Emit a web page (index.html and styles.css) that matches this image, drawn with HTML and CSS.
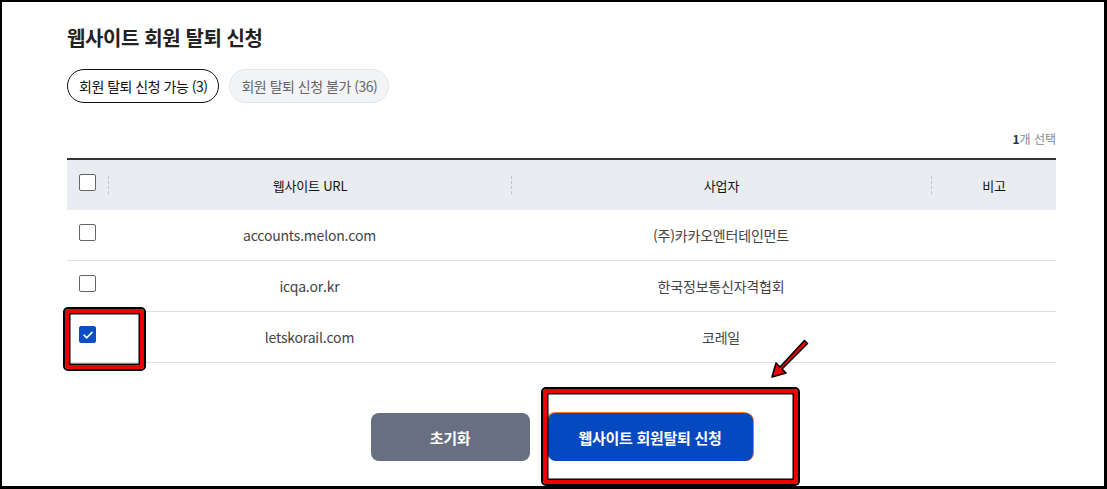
FILE: index.html
```html
<!DOCTYPE html>
<html lang="ko">
<head>
<meta charset="utf-8">
<link rel="stylesheet" href="styles.css">
</head>
<body>
<div class="frame">
  <div class="content">
    <h1 class="title">웹사이트 회원 탈퇴 신청</h1>
    <div class="tabs">
      <span class="tab active">회원 탈퇴 신청 가능 (3)</span>
      <span class="tab">회원 탈퇴 신청 불가 (36)</span>
    </div>
    <div class="count"><b>1</b>개 선택</div>
    <div class="table">
      <div class="row head">
        <div class="cell chk"><span class="box"></span></div>
        <div class="cell sep">웹사이트 URL</div>
        <div class="cell sep">사업자</div>
        <div class="cell sep">비고</div>
      </div>
      <div class="row">
        <div class="cell chk"><span class="box"></span></div>
        <div class="cell">accounts.melon.com</div>
        <div class="cell">(주)카카오엔터테인먼트</div>
        <div class="cell"></div>
      </div>
      <div class="row">
        <div class="cell chk"><span class="box"></span></div>
        <div class="cell">icqa.or.kr</div>
        <div class="cell">한국정보통신자격협회</div>
        <div class="cell"></div>
      </div>
      <div class="row">
        <div class="cell chk"><span class="box checked"><svg width="12" height="10" viewBox="0 0 12 10"><path d="M2 5.2 L4.8 7.8 L10 2.4" fill="none" stroke="#fff" stroke-width="1.6" stroke-linecap="round" stroke-linejoin="round"/></svg></span></div>
        <div class="cell">letskorail.com</div>
        <div class="cell">코레일</div>
        <div class="cell"></div>
      </div>
    </div>
    <div class="actions">
      <button class="btn reset">초기화</button>
      <button class="btn submit">웹사이트 회원탈퇴 신청</button>
    </div>
  </div>
  <div class="mark mark-chk"></div>
  <div class="mark mark-btn"></div>
  <svg class="arrow" width="50" height="50" viewBox="0 0 50 50">
    <path d="M40.5 6.5 L43.5 9.5 L18 35 L22 39 L8 43 L12 29 L16 33 L40.5 6.5 Z" fill="#ee0000" stroke="#000" stroke-width="1.6" stroke-linejoin="round"/>
  </svg>
</div>
</body>
</html>
```

FILE: styles.css
```css
* { box-sizing: border-box; }
html, body { margin: 0; padding: 0; background: #fff; }
body {
  font-family: "Noto Sans CJK KR", "Noto Sans", sans-serif;
  color: #222;
}
.frame {
  position: relative;
  width: 1107px;
  height: 489px;
  border-style: solid;
  border-color: #000;
  border-width: 2px 3px 3px 2px;
  overflow: hidden;
}
.content {
  padding: 21px 0 0 65px;
  width: 1054px;
}
.title {
  margin: 0;
  font-size: 20px;
  line-height: 30px;
  font-weight: 700;
  color: #222;
  letter-spacing: -0.4px;
}
.tabs {
  display: flex;
  gap: 10px;
  margin-top: 16px;
}
.tab {
  height: 34px;
  padding: 0 11px;
  border: 1px solid #e2e4e8;
  border-radius: 17px;
  background: #f3f4f6;
  color: #666;
  font-size: 14px;
  display: flex;
  align-items: center;
  letter-spacing: -0.5px;
}
.tab.active {
  border-color: #111;
  background: #fff;
  color: #111;
}
.count {
  margin-top: 27px;
  text-align: right;
  font-size: 12px;
  line-height: 18px;
  color: #888;
}
.count b { color: #333; font-weight: 700; }
.table {
  margin-top: 10px;
  border-top: 2px solid #333;
}
.row {
  display: grid;
  grid-template-columns: 41px 403px 420px 125px;
  height: 51px;
  border-bottom: 1px solid #dedede;
  align-items: center;
}
.row.head {
  background: #e9edf1;
  height: 50px;
  border-bottom: none;
}
.cell {
  height: 100%;
  display: flex;
  align-items: center;
  justify-content: center;
  font-size: 14px;
  color: #444;
  letter-spacing: -0.2px;
}
.head .cell { font-size: 13px; color: #111; }
.head .cell.sep { border-left: 1px dashed #b9c5d2; height: 18px; }
.cell.chk {
  justify-content: flex-start;
  align-items: flex-start;
  padding: 14px 0 0 12px;
}
.head .cell.chk { padding-top: 14px; }
.box {
  width: 17px;
  height: 17px;
  border: 1.5px solid #666;
  border-radius: 2px;
  background: #fff;
  display: flex;
  align-items: center;
  justify-content: center;
}
.box.checked {
  background: #0a4fc4;
  border-color: #0a4fc4;
}
.actions {
  display: flex;
  justify-content: center;
  gap: 18px;
  margin-top: 50px;
}
.btn {
  height: 48px;
  border: none;
  border-radius: 8px;
  color: #fff;
  font-family: inherit;
  font-size: 15px;
  font-weight: 700;
  letter-spacing: -0.3px;
}
.btn.reset { width: 159px; background: #676f80; }
.btn.submit {
  width: 205px;
  background: #0449c0;
  box-shadow: 1px 0 0 #f47a20, -1px -1px 0 #f47a20;
}
.mark {
  position: absolute;
  border: 4px solid #ee0000;
  outline: 2px solid #000;
  box-shadow: inset 0 0 0 1.5px #000;
  border-radius: 3px;
}
.mark-chk { left: 63px; top: 307px; width: 79px; height: 60px; }
.mark-btn { left: 541px; top: 387px; width: 255px; height: 95px; }
.arrow { position: absolute; left: 762px; top: 332px; }
```
